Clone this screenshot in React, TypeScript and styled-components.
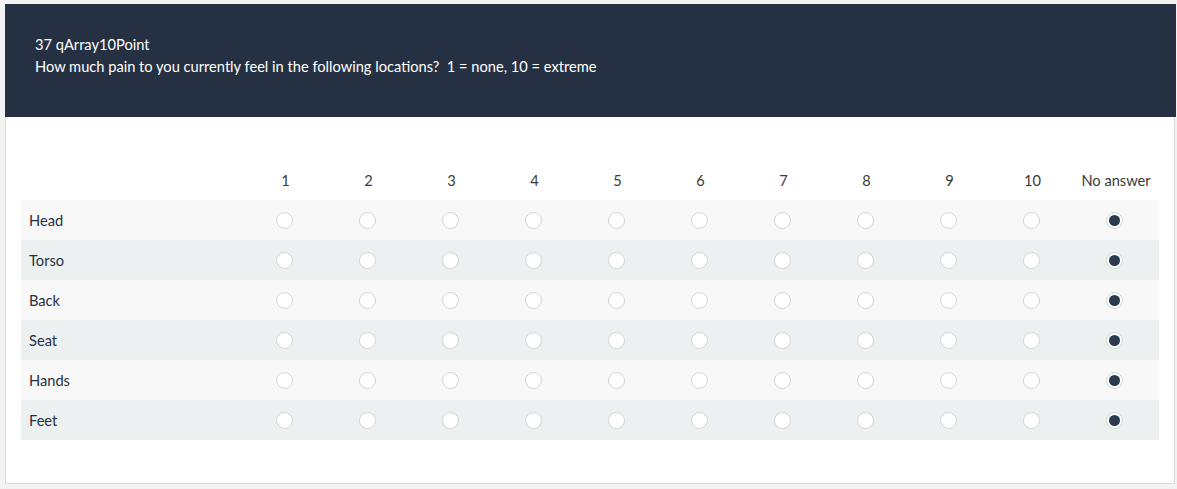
import React from "react";
import styled, { createGlobalStyle } from "styled-components";

const Global = createGlobalStyle`
  html, body { margin: 0; padding: 0; background: #f3f3f3; }
  body { font-family: Lato, "Open Sans", "Liberation Sans", sans-serif; }
`;

const Page = styled.div`
  padding: 4px 2px 0 5px;
`;

const Card = styled.div`
  width: 1168px;
  height: 478px;
  background: #ffffff;
  border: 1px solid #dcdcdc;
  box-sizing: content-box;
  display: flex;
  flex-direction: column;
`;

const Header = styled.div`
  margin: -1px -2px 0 -1px;
  height: 113px;
  box-sizing: border-box;
  background: #253142;
  color: #ffffff;
  padding: 30px 30px 0 30px;
  font-size: 14.65px;
  line-height: 22px;
`;

const Line = styled.div``;

const Body = styled.div`
  padding: 43px 14px 0 15px;
`;

const Grid = styled.div`
  display: grid;
  grid-template-columns: 222px repeat(10, 83px) 86px;
  width: 1138px;
`;

const HeadCell = styled.div<{ $shift?: number }>`
  height: 40px;
  display: flex;
  align-items: center;
  justify-content: center;
  padding-left: ${(p) => p.$shift ?? 2}px;
  font-size: 14.65px;
  color: #3a3a3a;
`;

const Row = styled.div<{ $alt: boolean }>`
  display: contents;
  & > div {
    background: ${(p) => (p.$alt ? "#ecf0f1" : "#f8f8f8")};
  }
`;

const Label = styled.div`
  height: 40px;
  display: flex;
  align-items: center;
  padding-left: 8px;
  font-size: 14.65px;
  color: #253142;
`;

const Cell = styled.div`
  height: 40px;
  display: flex;
  align-items: center;
  justify-content: center;
`;

const Radio = styled.span<{ $checked: boolean }>`
  width: 17px;
  height: 17px;
  box-sizing: border-box;
  border-radius: 50%;
  border: 1px solid #d2d2d2;
  background: #ffffff;
  display: flex;
  align-items: center;
  justify-content: center;
  margin-left: ${(p) => (p.$checked ? "-4px" : "0px")};
  &::after {
    content: "";
    width: 11px;
    height: 11px;
    border-radius: 50%;
    background: ${(p) => (p.$checked ? "#2a3a4f" : "transparent")};
  }
`;

const cols = ["1", "2", "3", "4", "5", "6", "7", "8", "9", "10", "No answer"];
const rows = ["Head", "Torso", "Back", "Seat", "Hands", "Feet"];

export default function App() {
  return (
    <>
      <Global />
      <Page>
        <Card>
          <Header>
            <Line>37 qArray10Point</Line>
            <Line>How much pain to you currently feel in the following locations?&nbsp; 1 = none, 10 = extreme</Line>
          </Header>
          <Body>
            <Grid>
              <HeadCell />
              {cols.map((c, j) => (
                <HeadCell key={c} $shift={j === cols.length - 1 ? -4 : 2}>
                  {c}
                </HeadCell>
              ))}
              {rows.map((r, i) => (
                <Row key={r} $alt={i % 2 === 1}>
                  <Label>{r}</Label>
                  {cols.map((c, j) => (
                    <Cell key={c}>
                      <Radio $checked={j === cols.length - 1} />
                    </Cell>
                  ))}
                </Row>
              ))}
            </Grid>
          </Body>
        </Card>
      </Page>
    </>
  );
}
